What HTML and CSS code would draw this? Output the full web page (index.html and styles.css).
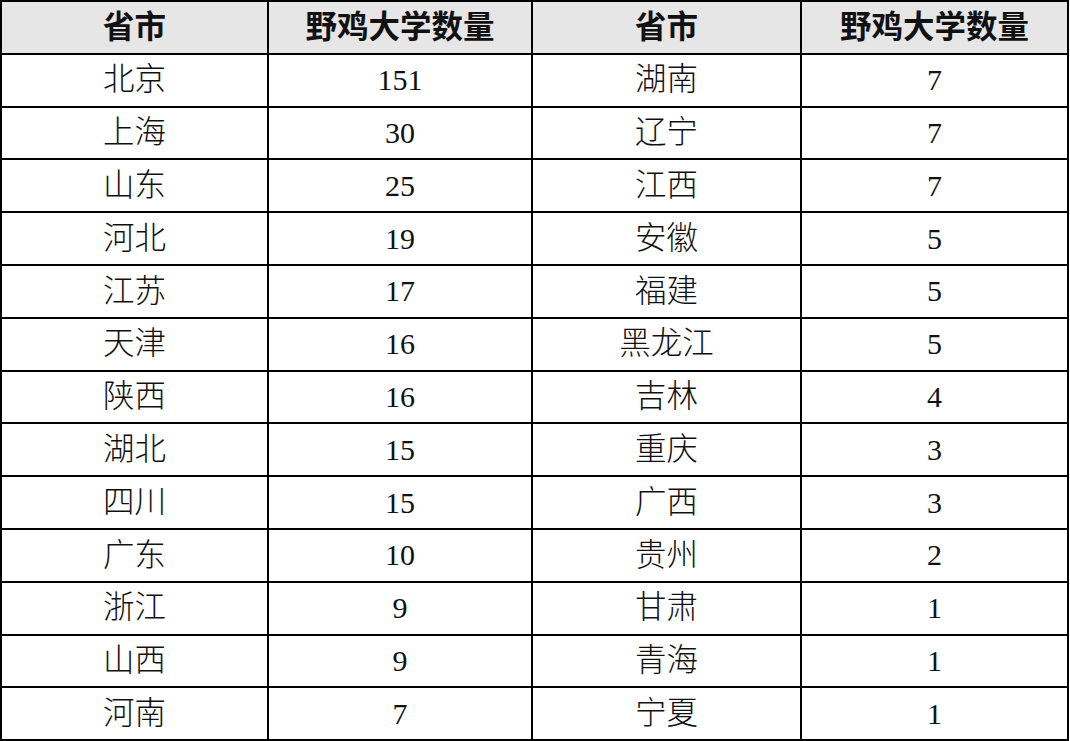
FILE: index.html
```html
<!DOCTYPE html>
<html lang="zh-CN">
<head>
<meta charset="utf-8">
<title>野鸡大学数量</title>
<link rel="stylesheet" href="styles.css">
</head>
<body>
<table class="data">
  <colgroup>
    <col class="c1"><col class="c2"><col class="c3"><col class="c4">
  </colgroup>
  <thead>
    <tr><th>省市</th><th>野鸡大学数量</th><th>省市</th><th>野鸡大学数量</th></tr>
  </thead>
  <tbody>
    <tr><td class="name">北京</td><td>151</td><td class="name">湖南</td><td>7</td></tr>
    <tr><td class="name">上海</td><td>30</td><td class="name">辽宁</td><td>7</td></tr>
    <tr><td class="name">山东</td><td>25</td><td class="name">江西</td><td>7</td></tr>
    <tr><td class="name">河北</td><td>19</td><td class="name">安徽</td><td>5</td></tr>
    <tr><td class="name">江苏</td><td>17</td><td class="name">福建</td><td>5</td></tr>
    <tr><td class="name">天津</td><td>16</td><td class="name">黑龙江</td><td>5</td></tr>
    <tr><td class="name">陕西</td><td>16</td><td class="name">吉林</td><td>4</td></tr>
    <tr><td class="name">湖北</td><td>15</td><td class="name">重庆</td><td>3</td></tr>
    <tr><td class="name">四川</td><td>15</td><td class="name">广西</td><td>3</td></tr>
    <tr><td class="name">广东</td><td>10</td><td class="name">贵州</td><td>2</td></tr>
    <tr><td class="name">浙江</td><td>9</td><td class="name">甘肃</td><td>1</td></tr>
    <tr><td class="name">山西</td><td>9</td><td class="name">青海</td><td>1</td></tr>
    <tr><td class="name">河南</td><td>7</td><td class="name">宁夏</td><td>1</td></tr>
  </tbody>
</table>
</body>
</html>
```
FILE: styles.css
```css
html, body {
  margin: 0;
  padding: 0;
  background: #ffffff;
}
.data {
  border-collapse: collapse;
  table-layout: fixed;
  width: 1069px;
  font-family: "Liberation Serif", "Noto Sans CJK SC", serif;
  font-size: 30px;
  color: #111;
}
.c1 { width: 267px; }
.c2 { width: 264px; }
.c3 { width: 269px; }
.c4 { width: 267px; }
.data th, .data td {
  border: 2px solid #000;
  text-align: center;
  vertical-align: middle;
  padding: 0;
  height: 52.8px;
  box-sizing: border-box;
  line-height: 1;
}
.data th {
  background: #e6e6e6;
  font-weight: 700;
  font-size: 31.5px;
}
.data td {
  font-weight: 300;
}
.data td.name {
  font-size: 31.5px;
}
```
